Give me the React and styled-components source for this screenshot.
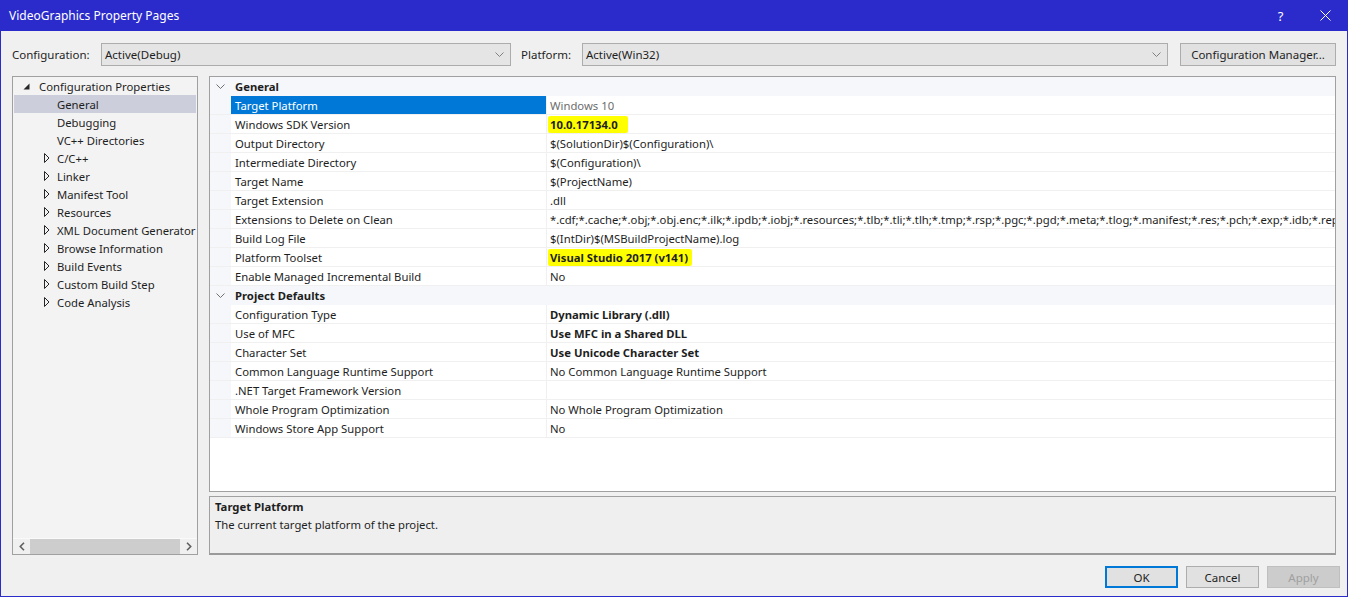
import React from "react";
import styled, { createGlobalStyle } from "styled-components";

const FONT = `"Noto Sans", "Open Sans", sans-serif`;
const SIZE = "11.3px";

const GlobalStyle = createGlobalStyle`
  html, body {
    margin: 0;
    padding: 0;
    background: #f0f0f0;
  }
  body {
    font-family: ${FONT};
    font-size: ${SIZE};
    color: #1e1e1e;
  }
  * {
    box-sizing: border-box;
  }
`;

const Window = styled.div`
  width: 1348px;
  height: 597px;
  border: 1px solid #2b2bcb;
  border-top: none;
  background: #f0f0f0;
  display: flex;
  flex-direction: column;
  overflow: hidden;
`;

const TitleBar = styled.div`
  height: 31px;
  margin: 0 -1px;
  background: #2b2bcb;
  color: #fff;
  display: flex;
  align-items: center;
  padding-left: 9px;
  font-size: 12px;
`;

const TitleText = styled.div`
  flex: 1;
`;

const TitleButton = styled.div`
  width: 45px;
  height: 31px;
  display: flex;
  align-items: center;
  justify-content: center;
  font-size: 13px;
`;

const Body = styled.div`
  flex: 1;
  display: flex;
  flex-direction: column;
  padding: 0 11px;
`;

const ConfigRow = styled.div`
  margin-top: 12px;
  height: 23px;
  display: grid;
  grid-template-columns: 89px 410px 10px 61px 586px 12px 156px;
  align-items: center;
`;

const Label = styled.div`
  font-size: 11.5px;
`;

const Dropdown = styled.div`
  height: 23px;
  background: #e5e5e5;
  border: 1px solid #acacac;
  display: flex;
  align-items: center;
  padding: 0 6px 0 3px;
  font-size: 11.5px;
  span {
    flex: 1;
  }
`;

const Button = styled.button`
  height: ${p => (p.$small ? 22 : 23)}px;
  font-family: ${FONT};
  font-size: 11.5px;
  color: ${p => (p.$disabled ? "#a0a0a0" : "#1e1e1e")};
  background: ${p => (p.$disabled ? "#cccccc" : "#e1e1e1")};
  border: ${p => (p.$primary ? "2px solid #0078d7" : p.$disabled ? "1px solid #bfbfbf" : "1px solid #adadad")};
  padding: 0;
`;

const Main = styled.div`
  margin-top: 10px;
  height: 479px;
  display: flex;
  gap: 11px;
`;

const Tree = styled.div`
  width: 186px;
  border: 1px solid #a0a0a0;
  background: #f3f3f3;
  display: flex;
  flex-direction: column;
`;

const TreeList = styled.div`
  flex: 1;
`;

const TreeRow = styled.div`
  height: 18px;
  margin: 0 1px;
  display: flex;
  align-items: center;
  padding-left: ${p => p.$indent}px;
  background: ${p => (p.$selected ? "#cccedb" : "transparent")};
  white-space: nowrap;
`;

const Toggle = styled.div`
  width: ${p => p.$width}px;
  display: flex;
  align-items: center;
`;

const HScroll = styled.div`
  height: 16px;
  display: flex;
  align-items: center;
  background: #f0f0f0;
  border-top: 1px solid #fafafa;
`;

const ScrollArrow = styled.div`
  width: 17px;
  height: 16px;
  display: flex;
  align-items: center;
  justify-content: center;
`;

const ScrollThumb = styled.div`
  flex: 1;
  height: 15px;
  background: #cdcdcd;
`;

const RightColumn = styled.div`
  flex: 1;
  display: flex;
  flex-direction: column;
  gap: 4px;
  min-width: 0;
`;

const Grid = styled.div`
  height: 416px;
  border: 1px solid #a0a0a0;
  background: #fff;
  overflow: hidden;
`;

const Row = styled.div`
  height: 19px;
  display: grid;
  grid-template-columns: 21px 316px 1fr;
  border-bottom: 1px solid #f0f0f0;
`;

const Gutter = styled.div`
  background: #f5f7fa;
  display: flex;
  align-items: center;
  justify-content: center;
  padding-right: 1px;
`;

const CategoryRow = styled(Row)`
  background: #f5f7fa;
  border-bottom-color: #f5f7fa;
`;

const CategoryLabel = styled.div`
  grid-column: 2 / 4;
  font-weight: bold;
  padding-left: 4px;
  display: flex;
  align-items: center;
`;

const NameCell = styled.div`
  padding-left: 4px;
  display: flex;
  align-items: center;
  border-right: 1px solid #f0f0f0;
  background: ${p => (p.$selected ? "#0078d7" : "transparent")};
  color: ${p => (p.$selected ? "#fff" : "#1e1e1e")};
  white-space: nowrap;
  overflow: hidden;
`;

const ValueCell = styled.div`
  padding-left: 1px;
  display: flex;
  align-items: center;
  font-weight: ${p => (p.$bold ? "bold" : "normal")};
  color: ${p => (p.$muted ? "#6d6d6d" : "#1e1e1e")};
  white-space: nowrap;
  overflow: hidden;
  min-width: 0;
`;

const ValueText = styled.span`
  padding: 1px ${p => (p.$highlight ? p.$pad : 0)}px 1px 2px;
  background: ${p => (p.$highlight ? "#ffff00" : "transparent")};
  border-radius: ${p => (p.$highlight ? "2px" : "0")};
`;

const Description = styled.div`
  height: 59px;
  border: 1px solid #a0a0a0;
  border-bottom: 2px solid #9a9a9a;
  background: #efefef;
  padding: 1px 5px;
  line-height: 18px;
`;

const DescTitle = styled.div`
  font-weight: bold;
`;

const Footer = styled.div`
  margin-top: 11px;
  margin-right: -4px;
  display: flex;
  justify-content: flex-end;
  gap: 8px;
  button {
    width: 73px;
  }
`;

const Chevron = ({ color = "#707070" }) => (
  <svg width="9" height="5" viewBox="0 0 9 5">
    <path d="M0.5 0.5 L4.5 4.5 L8.5 0.5" fill="none" stroke={color} strokeWidth="1" />
  </svg>
);

const Expanded = () => (
  <svg width="7" height="7" viewBox="0 0 7 7">
    <path d="M6.5 0.5 L6.5 6.5 L0.5 6.5 Z" fill="#262626" />
  </svg>
);

const Collapsed = () => (
  <svg width="6" height="10" viewBox="0 0 6 10">
    <path d="M0.5 0.5 L5 5 L0.5 9.5 Z" fill="none" stroke="#262626" strokeWidth="1" />
  </svg>
);

const ArrowSmall = ({ dir }) => (
  <svg width="6" height="9" viewBox="0 0 6 9">
    <path
      d={dir === "left" ? "M5 0.8 L1.3 4.5 L5 8.2" : "M1 0.8 L4.7 4.5 L1 8.2"}
      fill="none"
      stroke="#606060"
      strokeWidth="1.6"
    />
  </svg>
);

const CloseIcon = () => (
  <svg width="11" height="11" viewBox="0 0 11 11">
    <path d="M0.5 0.5 L10.5 10.5 M10.5 0.5 L0.5 10.5" stroke="#fff" strokeWidth="1" />
  </svg>
);

const treeItems = [
  { label: "Configuration Properties", level: 0, expanded: true },
  { label: "General", level: 1, selected: true },
  { label: "Debugging", level: 1 },
  { label: "VC++ Directories", level: 1 },
  { label: "C/C++", level: 1, collapsed: true },
  { label: "Linker", level: 1, collapsed: true },
  { label: "Manifest Tool", level: 1, collapsed: true },
  { label: "Resources", level: 1, collapsed: true },
  { label: "XML Document Generator", level: 1, collapsed: true },
  { label: "Browse Information", level: 1, collapsed: true },
  { label: "Build Events", level: 1, collapsed: true },
  { label: "Custom Build Step", level: 1, collapsed: true },
  { label: "Code Analysis", level: 1, collapsed: true },
];

const sections = [
  {
    title: "General",
    rows: [
      { name: "Target Platform", value: "Windows 10", selected: true, muted: true },
      { name: "Windows SDK Version", value: "10.0.17134.0", bold: true, highlight: 10 },
      { name: "Output Directory", value: "$(SolutionDir)$(Configuration)\\" },
      { name: "Intermediate Directory", value: "$(Configuration)\\" },
      { name: "Target Name", value: "$(ProjectName)" },
      { name: "Target Extension", value: ".dll" },
      {
        name: "Extensions to Delete on Clean",
        value:
          "*.cdf;*.cache;*.obj;*.obj.enc;*.ilk;*.ipdb;*.iobj;*.resources;*.tlb;*.tli;*.tlh;*.tmp;*.rsp;*.pgc;*.pgd;*.meta;*.tlog;*.manifest;*.res;*.pch;*.exp;*.idb;*.rep;*.xdc;*.pdb;*_manifest.rc;*.bsc;*.sbr;*.xml;*.metagen;*.bi",
      },
      { name: "Build Log File", value: "$(IntDir)$(MSBuildProjectName).log" },
      { name: "Platform Toolset", value: "Visual Studio 2017 (v141)", bold: true, highlight: 4 },
      { name: "Enable Managed Incremental Build", value: "No" },
    ],
  },
  {
    title: "Project Defaults",
    rows: [
      { name: "Configuration Type", value: "Dynamic Library (.dll)", bold: true },
      { name: "Use of MFC", value: "Use MFC in a Shared DLL", bold: true },
      { name: "Character Set", value: "Use Unicode Character Set", bold: true },
      { name: "Common Language Runtime Support", value: "No Common Language Runtime Support" },
      { name: ".NET Target Framework Version", value: "" },
      { name: "Whole Program Optimization", value: "No Whole Program Optimization" },
      { name: "Windows Store App Support", value: "No" },
    ],
  },
];

const PropertyGrid = () => (
  <Grid>
    {sections.map(section => (
      <React.Fragment key={section.title}>
        <CategoryRow>
          <Gutter>
            <Chevron />
          </Gutter>
          <CategoryLabel>{section.title}</CategoryLabel>
        </CategoryRow>
        {section.rows.map(row => (
          <Row key={row.name}>
            <Gutter />
            <NameCell $selected={row.selected}>{row.name}</NameCell>
            <ValueCell $bold={row.bold} $muted={row.muted}>
              <ValueText $highlight={!!row.highlight} $pad={row.highlight}>
                {row.value}
              </ValueText>
            </ValueCell>
          </Row>
        ))}
      </React.Fragment>
    ))}
  </Grid>
);

export default function App() {
  return (
    <>
      <GlobalStyle />
      <Window>
        <TitleBar>
          <TitleText>VideoGraphics Property Pages</TitleText>
          <TitleButton>?</TitleButton>
          <TitleButton>
            <CloseIcon />
          </TitleButton>
        </TitleBar>
        <Body>
          <ConfigRow>
            <Label>Configuration:</Label>
            <Dropdown>
              <span>Active(Debug)</span>
              <Chevron color="#808080" />
            </Dropdown>
            <div />
            <Label>Platform:</Label>
            <Dropdown>
              <span>Active(Win32)</span>
              <Chevron color="#808080" />
            </Dropdown>
            <div />
            <Button>Configuration Manager...</Button>
          </ConfigRow>
          <Main>
            <Tree>
              <TreeList>
                {treeItems.map(item => (
                  <TreeRow
                    key={item.label}
                    $indent={item.level === 0 ? 9 : 30}
                    $selected={item.selected}
                  >
                    <Toggle $width={item.level === 0 ? 16 : 13}>
                      {item.expanded && <Expanded />}
                      {item.collapsed && <Collapsed />}
                    </Toggle>
                    {item.label}
                  </TreeRow>
                ))}
              </TreeList>
              <HScroll>
                <ScrollArrow>
                  <ArrowSmall dir="left" />
                </ScrollArrow>
                <ScrollThumb />
                <ScrollArrow>
                  <ArrowSmall dir="right" />
                </ScrollArrow>
              </HScroll>
            </Tree>
            <RightColumn>
              <PropertyGrid />
              <Description>
                <DescTitle>Target Platform</DescTitle>
                <div>The current target platform of the project.</div>
              </Description>
            </RightColumn>
          </Main>
          <Footer>
            <Button $primary $small>OK</Button>
            <Button $small>Cancel</Button>
            <Button $small $disabled>Apply</Button>
          </Footer>
        </Body>
      </Window>
    </>
  );
}
